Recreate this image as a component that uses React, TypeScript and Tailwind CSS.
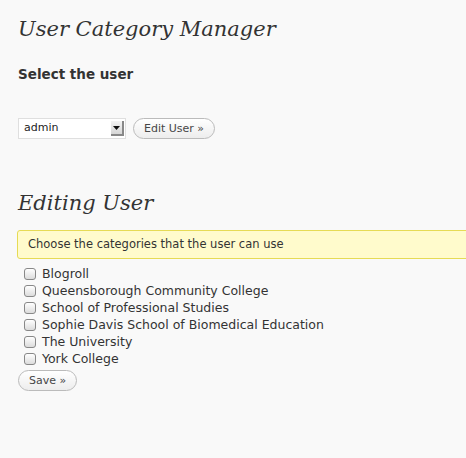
const categories = [
  "Blogroll",
  "Queensborough Community College",
  "School of Professional Studies",
  "Sophie Davis School of Biomedical Education",
  "The University",
  "York College",
];

const sans = "font-['Lucida_Grande','DejaVu_Sans',sans-serif]";
const serif = "font-['Georgia','DejaVu_Serif',serif]";

function PillButton({ children }: { children: React.ReactNode }) {
  return (
    <button
      className={`${sans} h-[21px] rounded-full border border-[#bbb] bg-gradient-to-b from-white to-[#ededed] px-[10px] text-[11px] leading-none text-[#464646]`}
    >
      {children}
    </button>
  );
}

export default function App() {
  return (
    <div className={`${sans} min-h-[458px] w-[466px] overflow-hidden bg-[#f9f9f9] pl-[18px] text-[#333]`}>
      <h2 className={`${serif} pt-[15px] text-[21px] italic leading-[29px] text-[#333]`}>
        User Category Manager
      </h2>
      <h3 className="mt-[21px] text-[13.5px] font-bold leading-[18px] text-[#333]">Select the user</h3>

      <div className="mt-[35px] flex items-center gap-[7px]">
        <div className="flex h-[21px] w-[108px] items-center border border-[#dfdfdf] bg-white">
          <span className="flex-1 pl-[5px] text-[11px] text-[#222]">admin</span>
          <span className="mr-[1px] flex h-[15px] w-[13px] items-center justify-center border-r-2 border-b-2 border-[#888] bg-gradient-to-b from-[#f4f4f4] to-[#d6d6d6]">
            <svg width="7" height="4" viewBox="0 0 7 4">
              <path d="M0 0h7L3.5 4z" fill="#111" />
            </svg>
          </span>
        </div>
        <PillButton>Edit User »</PillButton>
      </div>

      <h2 className={`${serif} mt-[50px] text-[21px] italic leading-[29px] text-[#333]`}>Editing User</h2>

      <div className="-mr-[10px] mt-[12px] ml-[-1px] rounded-[3px] border border-[#e6db55] bg-[#fffbcc] px-[10px] py-[6px]">
        <p className="text-[11.5px] leading-[15px] text-[#333]">Choose the categories that the user can use</p>
      </div>

      <ul className="mt-[6px] pl-[6px]">
        {categories.map((c) => (
          <li key={c} className="flex h-[17px] items-center gap-[6px]">
            <span className="h-[12px] w-[12px] rounded-[3px] border border-[#888] bg-gradient-to-b from-white to-[#dcdcdc]" />
            <span className="text-[12.5px] leading-[17px] text-[#333]">{c}</span>
          </li>
        ))}
      </ul>

      <div>
        <PillButton>Save »</PillButton>
      </div>
    </div>
  );
}
